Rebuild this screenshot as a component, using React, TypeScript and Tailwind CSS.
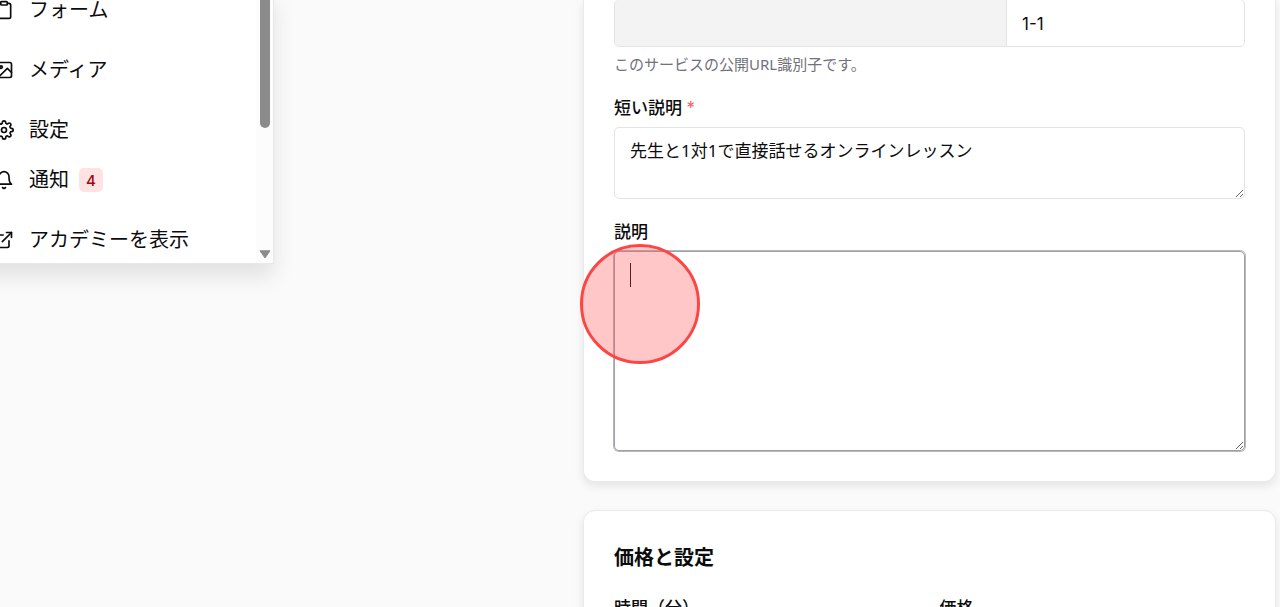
import type { ReactNode } from "react";
import {
  FiBell,
  FiClipboard,
  FiExternalLink,
  FiImage,
  FiSettings,
} from "react-icons/fi";

const font =
  "font-['Noto_Sans','Noto_Sans_CJK_JP',sans-serif] antialiased text-[#0c0c0d]";

function NavItem({
  icon,
  label,
  badge,
}: {
  icon: ReactNode;
  label: string;
  badge?: number;
}) {
  return (
    <a href="#" className="flex h-10 items-center gap-[15px] text-xl">
      {icon}
      <span className="flex items-center gap-2.5">
        {label}
        {badge !== undefined && (
          <span className="flex h-6 items-center rounded-[5px] bg-[#ffe2e2] px-[7px] font-['Inter',sans-serif] text-[15px] font-medium text-[#9f0712]">
            {badge}
          </span>
        )}
      </span>
    </a>
  );
}

function Sidebar() {
  return (
    <aside className="-mt-2.5 -ml-[26px] flex w-[300px] shrink-0 self-start border-r border-b border-[#e8e8e8] bg-white pl-5 shadow-[0_12px_20px_rgba(0,0,0,0.10)]">
      <nav className="flex flex-1 flex-col gap-5 pb-[3px]">
        <NavItem icon={<FiClipboard size={20} />} label="フォーム" />
        <NavItem icon={<FiImage size={20} />} label="メディア" />
        <div className="flex flex-col gap-2.5">
          <NavItem icon={<FiSettings size={20} />} label="設定" />
          <NavItem icon={<FiBell size={20} />} label="通知" badge={4} />
        </div>
        <NavItem icon={<FiExternalLink size={20} />} label="アカデミーを表示" />
      </nav>
      <div className="flex w-[17px] flex-col items-center justify-between bg-[#fcfcfc] pb-1">
        <div className="h-[138px] w-2.5 rounded-b-full bg-[#8b8b8b]" />
        <svg width="12" height="9" viewBox="0 0 12 9">
          <path
            d="M1 .8h10L6 8z"
            fill="#8b8b8b"
            stroke="#8b8b8b"
            strokeLinejoin="round"
          />
        </svg>
      </div>
    </aside>
  );
}

const cardStyle =
  "border-[#eaeaea] bg-white px-[30px] shadow-[0_4px_10px_rgba(0,0,0,0.09)]";
const labelStyle = "block text-[17px] leading-[26px] font-medium";

export default function App() {
  return (
    <div className={`flex h-screen overflow-hidden bg-[#fafafa] ${font}`}>
      <Sidebar />
      <main className="flex min-w-0 flex-1 flex-col gap-7 pr-1 pl-[309px]">
        <section
          className={`-mt-px shrink-0 rounded-b-xl border-x border-b pb-[30px] ${cardStyle}`}
        >
          <div className="flex h-12 overflow-hidden rounded-[5px] border border-[#e4e4e7]">
            <div className="flex-1 border-r border-[#e4e4e7] bg-[#f3f3f3]" />
            <input
              aria-label="URL識別子"
              defaultValue="1-1"
              className="w-[237px] px-[15px] pt-1 font-['Inter',sans-serif] text-[17px] outline-none"
            />
          </div>
          <p className="mt-[5px] text-[15px] leading-6 text-[#71717b]">
            このサービスの公開URL識別子です。
          </p>
          <label htmlFor="summary" className={`mt-[19px] ${labelStyle}`}>
            短い説明{" "}
            <span className="font-['Inter',sans-serif] font-normal text-[#fb5a5e]">
              *
            </span>
          </label>
          <textarea
            id="summary"
            defaultValue="先生と1対1で直接話せるオンラインレッスン"
            className="mt-1.5 block h-[72px] w-full rounded-[5px] border border-[#e4e4e7] px-[15px] py-2.5 text-[17px] leading-[26px] outline-none"
          />
          <label htmlFor="description" className={`mt-5 ${labelStyle}`}>
            説明
          </label>
          <div className="relative mt-1.5">
            <textarea
              id="description"
              className="block h-[200px] w-full rounded-[5px] border border-[#9f9fa9] px-[15px] py-2.5 text-[17px] leading-[26px] ring-1 ring-[#9f9fa9]/75 outline-none"
            />
            <span className="absolute top-3 left-4 h-6 w-px bg-[#0c0c0d]" />
            <span className="pointer-events-none absolute -top-[7px] -left-[34px] size-[120px] rounded-full border-[3px] border-[#ff4444] bg-[#ff4444]/30 bg-clip-padding" />
          </div>
        </section>

        <section
          className={`shrink-0 rounded-xl border py-8 ${cardStyle}`}
        >
          <h2 className="text-xl leading-[30px] font-bold">価格と設定</h2>
          <div className="mt-[22px] grid grid-cols-2 gap-5">
            <label htmlFor="duration" className={labelStyle}>
              時間（分）
              <input
                id="duration"
                className="mt-1.5 block h-12 w-full rounded-[5px] border border-[#e4e4e7] px-[15px]"
              />
            </label>
            <label htmlFor="price" className={labelStyle}>
              価格
              <input
                id="price"
                className="mt-1.5 block h-12 w-full rounded-[5px] border border-[#e4e4e7] px-[15px]"
              />
            </label>
          </div>
        </section>
      </main>
    </div>
  );
}
